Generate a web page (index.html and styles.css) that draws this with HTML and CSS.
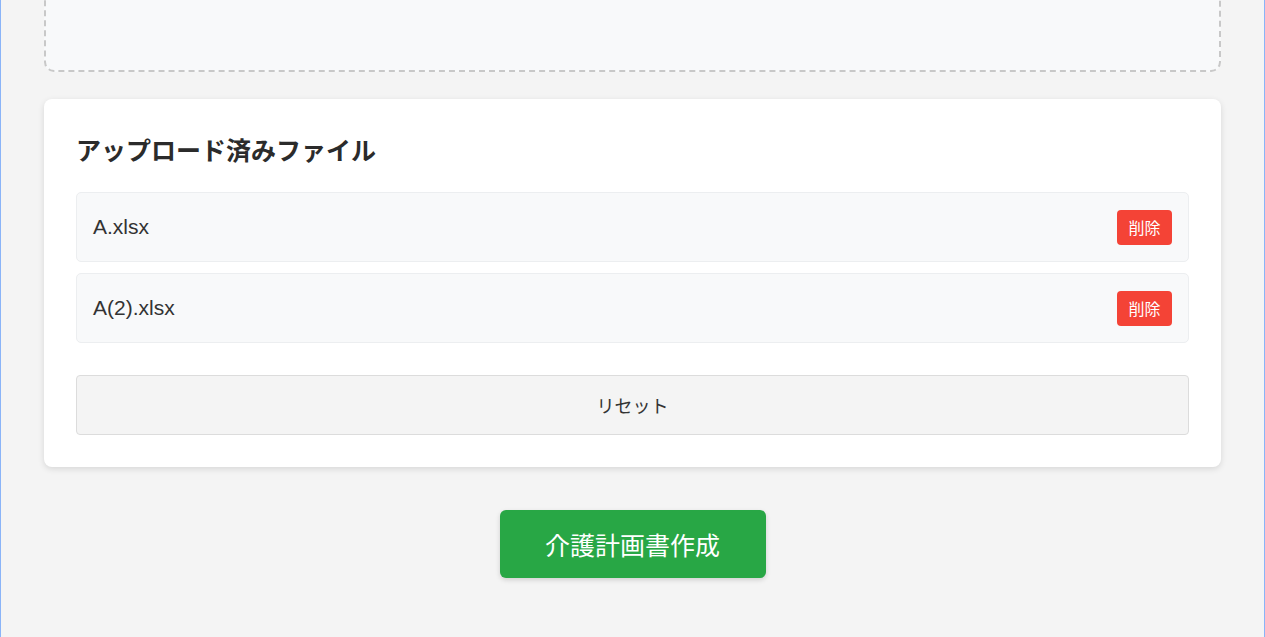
FILE: index.html
```html
<html>
  <head>
    <title>介護計画書作成</title>
    <meta charset="utf-8">
    <link rel="stylesheet" href="styles.css">
  </head>
  <body>
    <div class="frame">
      <div class="container">
        <div class="dropzone"></div>

        <div class="card">
          <h3>アップロード済みファイル</h3>
          <ul class="files">
            <li class="file">
              <span>A.xlsx</span>
              <button class="delete">削除</button>
            </li>
            <li class="file">
              <span>A(2).xlsx</span>
              <button class="delete">削除</button>
            </li>
          </ul>
          <button class="reset">リセット</button>
        </div>

        <div class="actions">
          <button class="create">介護計画書作成</button>
        </div>
      </div>
    </div>
  </body>
</html>
```

FILE: styles.css
```css
* {
  box-sizing: border-box;
}
html, body {
  margin: 0;
  height: 100%;
  overflow: hidden;
}
body {
  background-color: #f4f4f4;
  color: #333;
  font-family: "Liberation Sans", "Noto Sans CJK JP", sans-serif;
}
.frame {
  display: flow-root;
  height: 100%;
  border-left: 1px solid #8ab4f8;
  border-right: 1px solid #8ab4f8;
}
.container {
  padding: 0 43px;
}
.dropzone {
  margin-top: -100px;
  height: 172px;
  background-color: #f8f9fa;
  border: 2px dashed #c8c8c8;
  border-radius: 10px;
}
.card {
  margin-top: 27px;
  background-color: #fff;
  border-radius: 8px;
  box-shadow: 0 2px 6px rgba(0, 0, 0, 0.12);
  padding: 32px;
}
.card h3 {
  margin: 3px 0 0;
  font-size: 25px;
  line-height: 34px;
  font-weight: bold;
  color: #2b2b2b;
}
.files {
  list-style: none;
  margin: 24px 0 0;
  padding: 0;
}
.file {
  display: flex;
  align-items: center;
  justify-content: space-between;
  height: 70px;
  padding: 0 16px;
  margin-bottom: 11px;
  background-color: #f8f9fa;
  border: 1px solid #eceef0;
  border-radius: 5px;
  font-size: 21px;
  color: #333;
}
.delete {
  font-family: inherit;
  font-size: 16px;
  color: #fff;
  background-color: #f44336;
  border: none;
  border-radius: 4px;
  width: 55px;
  height: 35px;
  padding: 0;
}
.reset {
  display: block;
  width: 100%;
  height: 60px;
  margin-top: 32px;
  font-family: inherit;
  font-size: 18px;
  color: #333;
  background-color: #f4f4f4;
  border: 1px solid #dcdcdc;
  border-radius: 4px;
}
.actions {
  display: flex;
  justify-content: center;
  margin-top: 43px;
}
.create {
  width: 266px;
  height: 68px;
  font-family: inherit;
  font-size: 25px;
  color: #fff;
  background-color: #28a745;
  border: none;
  border-radius: 6px;
  box-shadow: 0 2px 5px rgba(0, 0, 0, 0.15);
}
```
